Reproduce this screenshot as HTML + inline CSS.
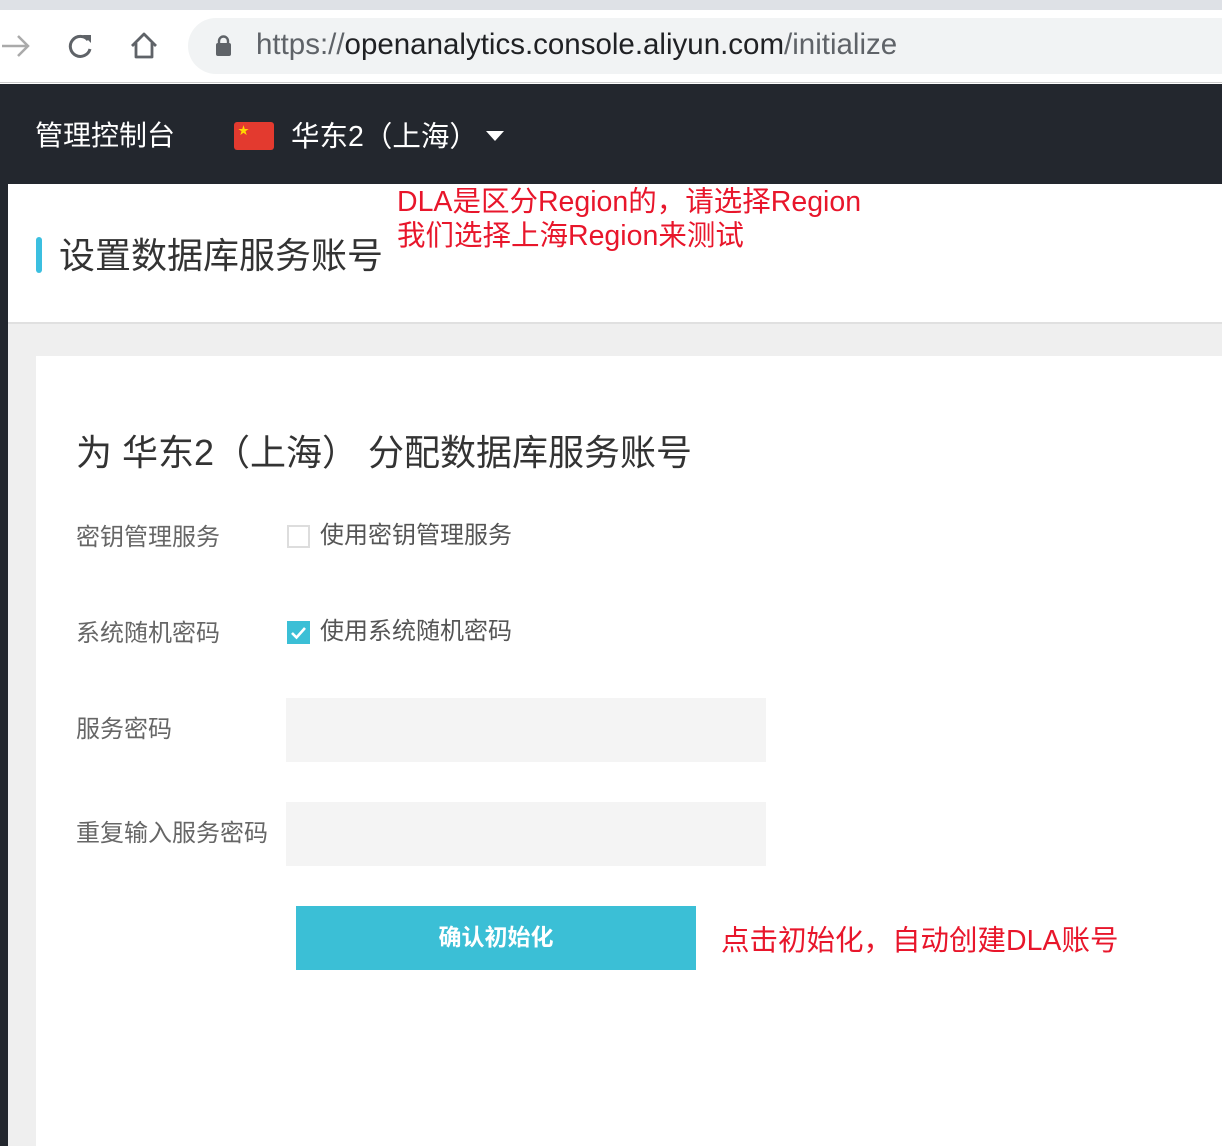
<!DOCTYPE html>
<html><head><meta charset="utf-8"><style>
*{margin:0;padding:0;box-sizing:border-box}
body{width:1222px;height:1146px;overflow:hidden;position:relative;background:#fff;font-family:"Liberation Sans","Noto Sans CJK SC",sans-serif}
.a{position:absolute;white-space:nowrap}
.red{color:#e8162b}
.lbl{color:#666;font-size:24px}
.cb{color:#555;font-size:24px}
</style></head><body>
<div class="a" style="left:0;top:0;width:1222px;height:10px;background:#dee1e6"></div>
<div class="a" style="left:0;top:10px;width:1222px;height:73px;background:#fff;border-bottom:1px solid #ccc"></div>
<svg class="a" style="left:0;top:30px" width="40" height="32"><path d="M2 16H28M18 6l10 10-10 10" stroke="#aaa" stroke-width="2.5" fill="none"/></svg>
<svg class="a" style="left:64px;top:30px" width="32" height="32"><path d="M24 10A10 10 0 1 0 26 19" stroke="#5f6368" stroke-width="3" fill="none"/><path d="M19 5h8v8z" fill="#5f6368"/></svg>
<svg class="a" style="left:128px;top:30px" width="32" height="32"><path d="M4 16L16 4 28 16M8 13v14h16V13" stroke="#5f6368" stroke-width="2.8" fill="none" stroke-linejoin="round"/></svg>
<div class="a" style="left:188px;top:18px;width:1060px;height:56px;border-radius:28px;background:#f1f3f4"></div>
<svg class="a" style="left:214px;top:34px" width="20" height="24"><rect x="2" y="9" width="15" height="13" rx="2" fill="#5f6368"/><path d="M5 10V7a4.5 4.5 0 0 1 9 0v3" stroke="#5f6368" stroke-width="2.4" fill="none"/></svg>
<div class="a" style="left:256px;top:28px;font-size:29.5px;color:#202124"><span style="color:#5f6368">https://</span>openanalytics.console.aliyun.com<span style="color:#5f6368">/initialize</span></div>
<div class="a" style="left:0;top:84px;width:1222px;height:100px;background:#23272e"></div>
<div class="a" style="left:35px;top:114px;font-size:28px;color:#fff">管理控制台</div>
<div class="a" style="left:234px;top:122px;width:40px;height:28px;background:#e33a2f;border-radius:3px"></div>
<div class="a" style="left:238px;top:122px;font-size:11px;color:#ffd700">★</div>
<div class="a" style="left:291px;top:114px;font-size:28.5px;color:#fff">华东2（上海）</div>
<div class="a" style="left:486px;top:131px;width:0;height:0;border-left:9px solid transparent;border-right:9px solid transparent;border-top:10px solid #fff"></div>
<div class="a" style="left:0;top:184px;width:8px;height:962px;background:#23272e"></div>
<div class="a" style="left:8px;top:322px;width:1214px;height:824px;background:#efefef;border-top:2px solid #e0e0e0"></div>
<div class="a" style="left:36px;top:237px;width:6px;height:36px;background:#3bbfe0;border-radius:3px"></div>
<div class="a" style="left:59px;top:227px;font-size:36px;color:#333">设置数据库服务账号</div>
<div class="a red" style="left:397px;top:185px;font-size:28.5px;line-height:34px">DLA是区分Region的，请选择Region<br>我们选择上海Region来测试</div>
<div class="a" style="left:36px;top:356px;width:1186px;height:790px;background:#fff"></div>
<div class="a" style="left:76px;top:424px;font-size:36px;color:#333">为 华东2（上海） 分配数据库服务账号</div>
<div class="a lbl" style="left:76px;top:517px">密钥管理服务</div>
<div class="a" style="left:287px;top:525px;width:23px;height:23px;border:2px solid #ddd"></div>
<div class="a cb" style="left:320px;top:515px">使用密钥管理服务</div>
<div class="a lbl" style="left:76px;top:613px">系统随机密码</div>
<div class="a" style="left:287px;top:621px;width:23px;height:23px;background:#3bbfd6"></div>
<svg class="a" style="left:287px;top:621px" width="23" height="23"><path d="M5 12l4.5 4.5L18 7" stroke="#fff" stroke-width="2.6" fill="none"/></svg>
<div class="a cb" style="left:320px;top:611px">使用系统随机密码</div>
<div class="a lbl" style="left:76px;top:709px">服务密码</div>
<div class="a" style="left:286px;top:698px;width:480px;height:64px;background:#f4f4f4"></div>
<div class="a lbl" style="left:76px;top:813px">重复输入服务密码</div>
<div class="a" style="left:286px;top:802px;width:480px;height:64px;background:#f4f4f4"></div>
<div class="a" style="left:296px;top:906px;width:400px;height:64px;background:#3bbfd6;color:#fff;font-size:23px;font-weight:bold;text-align:center;line-height:62px">确认初始化</div>
<div class="a red" style="left:721px;top:918px;font-size:28.5px">点击初始化，自动创建DLA账号</div>
</body></html>
